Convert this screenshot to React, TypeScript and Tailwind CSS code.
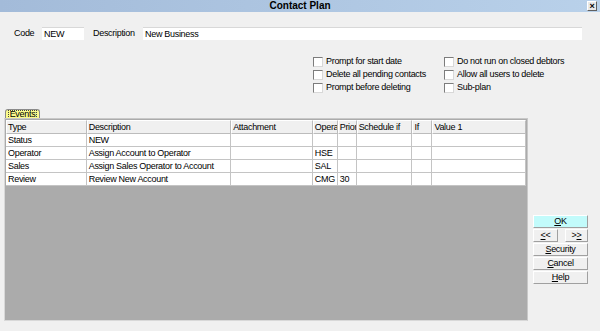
import React from "react";

const cols = ["w-[81px]", "w-[145px]", "w-[82px]", "w-[25px]", "w-[19px]", "w-[56px]", "w-[20px]", "w-[94px]"];
const headers = ["Type", "Description", "Attachment", "Opera", "Prior", "Schedule if", "If", "Value 1"];

const rows = [
  ["Status", "NEW", "", "", "", "", "", ""],
  ["Operator", "Assign Account to Operator", "", "HSE", "", "", "", ""],
  ["Sales", "Assign Sales Operator to Account", "", "SAL", "", "", "", ""],
  ["Review", "Review New Account", "", "CMG", "30", "", "", ""],
];

function Check({ label }: { label: string }) {
  return (
    <div className="flex h-[13px] items-center">
      <span className="h-[10px] w-[10px] border border-t-[#7c7c7c] border-l-[#7c7c7c] border-r-[#d8d8d8] border-b-[#d8d8d8] bg-white" />
      <span className="ml-[3px] whitespace-nowrap">{label}</span>
    </div>
  );
}

function Btn({ children, className = "" }: { children: React.ReactNode; className?: string }) {
  return (
    <div
      className={`flex h-[13px] items-center justify-center border border-t-white border-l-white border-r-[#a0a0a0] border-b-[#a0a0a0] ${className}`}
    >
      {children}
    </div>
  );
}

export default function App() {
  return (
    <div className="flex h-[331px] w-[600px] flex-col overflow-hidden bg-[#f0f0f0] font-['Liberation_Sans',Arial,sans-serif] text-[9px] leading-none tracking-[-0.3px] text-black">
      {/* title bar */}
      <div className="relative flex h-[12px] items-center justify-center bg-gradient-to-r from-[#a3bbd9] to-[#b9d1ea]">
        <span className="text-[10px] font-bold tracking-normal">Contact Plan</span>
        <span className="absolute right-[3px] top-[1px] flex h-[10px] w-[10px] items-center justify-center border border-t-white border-l-white border-r-[#606060] border-b-[#606060] bg-[#e8e8e8] text-[9px] font-bold">
          ×
        </span>
      </div>

      {/* code / description */}
      <div className="mt-[15px] flex h-[13px] items-center">
        <span className="w-[42px] pl-[14px]">Code</span>
        <div className="flex h-[13px] w-[42px] items-center border-t border-[#d8d8d8] bg-white pl-[2px]">NEW</div>
        <span className="ml-[9px] w-[50px]">Description</span>
        <div className="flex h-[13px] w-[439px] items-center border-t border-[#d8d8d8] bg-white pl-[2px]">
          New Business
        </div>
      </div>

      {/* options */}
      <div className="mt-[15px] grid grid-cols-[131px_auto] pl-[313px]">
        <Check label="Prompt for start date" />
        <Check label="Do not run on closed debtors" />
        <Check label="Delete all pending contacts" />
        <Check label="Allow all users to delete" />
        <Check label="Prompt before deleting" />
        <Check label="Sub-plan" />
      </div>

      {/* events + buttons */}
      <div className="mt-[15px] flex">
        <div className="flex w-[528px] flex-col pl-[4px]">
          <div className="ml-[1px] flex h-[9px] w-[35px] items-center justify-center rounded-t-[3px] border border-b-0 border-[#8a8a8a] bg-[#fbfb8c]">
            <span className="border border-dotted border-[#444] px-[1px] leading-[7px]">
              <span className="underline">E</span>vents
            </span>
          </div>
          <div className="flex h-[203px] flex-col border border-t-[#c8c8c8] border-l-[#d8d8d8] border-r-[#c8c8c8] border-b-[#d8d8d8] bg-[#ababab] p-px">
            <div className="flex h-[14px] bg-[#f0f0f0]">
              {headers.map((h, i) => (
                <div
                  key={h}
                  className={`${cols[i]} flex items-center overflow-hidden whitespace-nowrap border border-t-white border-l-white border-r-[#bcbcbc] border-b-[#bcbcbc] pl-[1px]`}
                >
                  {h}
                </div>
              ))}
            </div>
            {rows.map((r, ri) => (
              <div key={ri} className="flex h-[13px] bg-white">
                {r.map((c, i) => (
                  <div
                    key={i}
                    className={`${cols[i]} flex items-center overflow-hidden whitespace-nowrap border-b border-r border-[#c4c4c4] pl-[2px]`}
                  >
                    {c}
                  </div>
                ))}
              </div>
            ))}
          </div>
        </div>

        <div className="ml-[5px] flex w-[55px] flex-col gap-px pt-[106px]">
          <Btn className="h-[12px] bg-[#c2fbfb] border-t-[#e0e0e0] border-l-[#e0e0e0]">
            <span className="underline">O</span>K
          </Btn>
          <div className="flex justify-between">
            <Btn className="w-[25px]">
              <span className="underline">&lt;</span>&lt;
            </Btn>
            <Btn className="w-[23px]">
              &gt;<span className="underline">&gt;</span>
            </Btn>
          </div>
          <Btn>
            <span className="underline">S</span>ecurity
          </Btn>
          <Btn>
            <span className="underline">C</span>ancel
          </Btn>
          <Btn>
            <span className="underline">H</span>elp
          </Btn>
        </div>
      </div>
    </div>
  );
}
